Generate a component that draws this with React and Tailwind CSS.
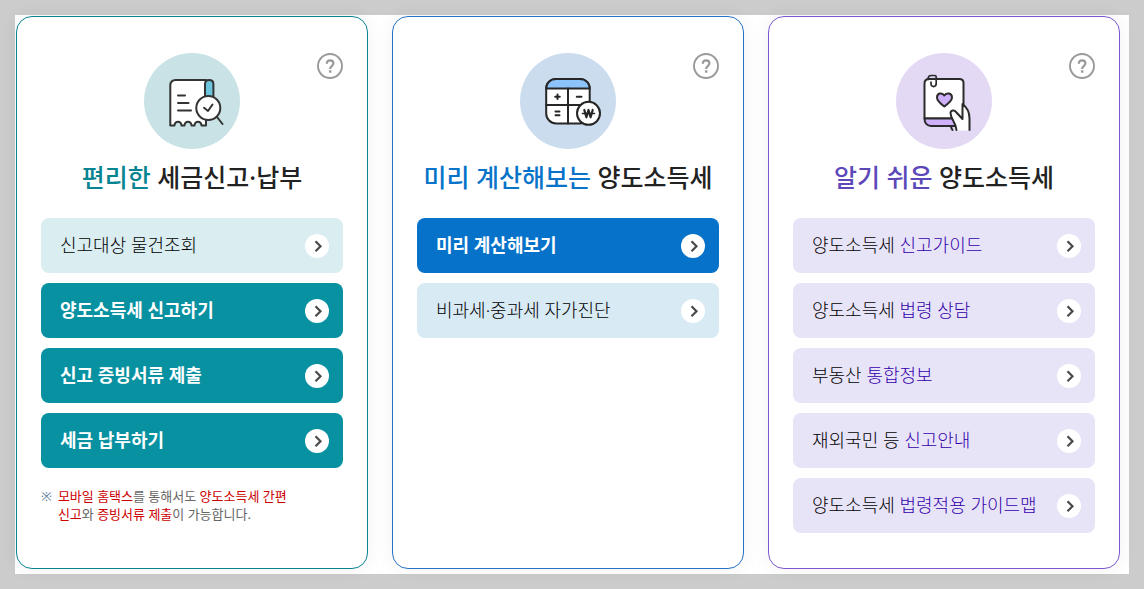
import React from 'react';

const FilingIcon = () => (
  <svg viewBox="0 0 96 96" className="w-24 h-24" fill="none" stroke="#333" strokeWidth="2" strokeLinecap="round" strokeLinejoin="round" aria-hidden="true">
    <circle cx="48" cy="48" r="48" fill="#c8e2e5" stroke="none" />
    <path d="M61 72.500h-3.500c-.5-5-6.500-5-7 0h-3c-.5-5-6.500-5-7 0h-3c-.5-5-6.500-5-7 0h-4.200V32.500c0-3.500 2-5.500 5.500-5.500h30.200v45.500z" fill="#fff" />
    <path d="M61 45V31c0-2.600 1.300-4 4.200-4s4.200 1.400 4.200 4v14z" fill="#6cc5dc" />
    <path d="M34 42.500h7M34 50h10.500M34 57.500h13" />
    <path d="M73 64l5.500 7" />
    <circle cx="64.300" cy="55" r="12" fill="#fff" />
    <path d="M60 54.800l4 3.200 4.500-6.500" />
  </svg>
);

const CalculatorIcon = () => (
  <svg viewBox="0 0 96 96" className="w-24 h-24" fill="none" stroke="#262626" strokeWidth="2" strokeLinecap="round" strokeLinejoin="round" aria-hidden="true">
    <circle cx="48" cy="48" r="48" fill="#cbdcef" stroke="none" />
    <rect x="26.200" y="26" width="43.500" height="44.500" rx="10" fill="#fff" />
    <path d="M26.200 35.500c0-5.500 4-9.500 10-9.500h23.500c6 0 10 4 10 9.500z" fill="#8cc3fb" />
    <path d="M26.200 52h43.500M48 35.500v35" />
    <path d="M35.200 43.800h4.600M37.500 41.500v4.600M56.800 43.800h4.700M35.500 58.500h4M35.500 62.200h4" strokeWidth="2" />
    <circle cx="68.500" cy="60.300" r="11.500" fill="#fff" />
    <path d="M64.300 57l2.100 7.300 2.100-7.300 2.100 7.300 2.100-7.300" strokeWidth="2.200" />
    <path d="M62.500 60.500h12" strokeWidth="1.600" />
  </svg>
);

const GuideIcon = () => (
  <svg viewBox="0 0 96 96" className="w-24 h-24" fill="none" stroke="#2b2b2b" strokeWidth="2" strokeLinecap="round" strokeLinejoin="round" aria-hidden="true">
    <circle cx="48" cy="48" r="48" fill="#e4d9f5" stroke="none" />
    <path d="M28.500 65.500V30.500c0-3 1.500-4.500 4.500-4.500h30.300c2.700 0 4.200 1.500 4.200 4v35.500z" fill="#fff" />
    <path d="M28.500 65.500H62v7.500H35c-4 0-6.500-3-6.500-7.500z" fill="#cfb0fb" />
    <path d="M32.200 26.500v-1c0-2 1-3 3-3h3.500c1 0 1.500.6 1.500 1.500v6.500c0 4-5.200 4-5.200 .5v-2" strokeWidth="1.700" />
    <path d="M48.300 53.500c-4-3-7.300-5.500-7.300-9 0-4.500 5.300-5.300 7.300-2 2-3.300 7.700-2.500 7.700 2 0 3.500-3.700 6-7.700 9z" fill="#cfb0fb" />
    <path d="M60.500 77.500c-.5-8.500-6-11.500-6-17.500 0-3 4-3.500 5.500-1l6.500 7V51c4 3 7.500 8.500 7.500 14.500v12z" fill="#fff" stroke="none" />
    <path d="M60.500 77c-.5-8-6-11-6-17 0-3 4-3.500 5.500-1l6.500 7V51c4 3 7 8.500 7 14.500V77M55 73.500c.3 1.500.8 2.500 1.500 3.500" />
  </svg>
);

const cards = [
  {
    id: 'filing',
    highlight: '편리한',
    title: '세금신고·납부',
    icon: <FilingIcon />,
    border: 'border-[#088491]',
    titleColor: 'text-[#078491]',
    primary: 'bg-[#0791a1]',
    secondary: 'bg-[#daedf0]',
    accent: 'text-[#111]',
    menus: [
      { label: '신고대상 물건조회' },
      { label: '양도소득세 신고하기', strong: true },
      { label: '신고 증빙서류 제출', strong: true },
      { label: '세금 납부하기', strong: true },
    ],
    hasNotice: true,
  },
  {
    id: 'calculate',
    highlight: '미리 계산해보는',
    title: '양도소득세',
    icon: <CalculatorIcon />,
    border: 'border-[#2572c4]',
    titleColor: 'text-[#0773c9]',
    primary: 'bg-[#0672c9]',
    secondary: 'bg-[#d8eaf4]',
    accent: 'text-[#111]',
    menus: [
      { label: '미리 계산해보기', strong: true },
      { label: '비과세·중과세 자가진단' },
    ],
  },
  {
    id: 'guide',
    highlight: '알기 쉬운',
    title: '양도소득세',
    icon: <GuideIcon />,
    border: 'border-[#7e57cc]',
    titleColor: 'text-[#5c48b9]',
    primary: 'bg-[#5c48b9]',
    secondary: 'bg-[#e8e4f8]',
    accent: 'text-[#3300aa]',
    menus: [
      { label: '양도소득세', accent: '신고가이드' },
      { label: '양도소득세', accent: '법령 상담' },
      { label: '부동산', accent: '통합정보' },
      { label: '재외국민 등', accent: '신고안내' },
      { label: '양도소득세', accent: '법령적용 가이드맵' },
    ],
  },
];

const HelpButton = ({ label }) => (
  <button type="button" aria-label={label} className="justify-self-end self-start cursor-pointer">
    <svg viewBox="0 0 26 26" className="w-[26px] h-[26px]" fill="none" stroke="#999" strokeWidth="2.200" aria-hidden="true">
      <circle cx="13" cy="13" r="12" strokeWidth="1.900" />
      <path d="M9.800 10.800c0-2.200 1.300-3.500 3.300-3.500s3.300 1.200 3.300 3c0 2.600-3.200 2.800-3.200 5.600" />
      <path d="M12 17.300h2.400v2.400H12z" fill="#999" stroke="none" />
    </svg>
  </button>
);

const MenuLink = ({ menu, card }) => (
  <a
    href="#"
    className={`flex items-center justify-between h-[55px] pl-[19px] pr-3.5 rounded-lg text-lg ${
      menu.strong ? `${card.primary} font-bold text-white` : `${card.secondary} font-light text-black`
    }`}
  >
    <span className="pb-0.5">
      {menu.label}
      {menu.accent && <span className={card.accent}> {menu.accent}</span>}
    </span>
    <span className="flex items-center justify-center w-6 h-6 rounded-full bg-white">
      <svg viewBox="0 0 24 24" className="w-6 h-6" fill="none" stroke="#4a4a4a" strokeWidth="2.200" aria-hidden="true">
        <path d="M10.500 7.200l5 5-5 5" />
      </svg>
    </span>
  </a>
);

const Notice = () => (
  <p className="flex gap-1.5 mt-[19px] text-[13px] leading-[18px] text-[#666]">
    <span className="text-[#5b7a9d]">※</span>
    <span>
      <em className="not-italic text-[#c00]">모바일 홈택스</em>를 통해서도 <em className="not-italic text-[#c00]">양도소득세 간편</em>
      <br />
      <em className="not-italic text-[#c00]">신고</em>와 <em className="not-italic text-[#c00]">증빙서류 제출</em>이 가능합니다.
    </span>
  </p>
);

const ServiceCard = ({ card }) => (
  <section className={`min-h-[553px] px-6 pt-9 pb-8 bg-white border rounded-2xl shadow-[0_0_20px_rgba(0,0,0,0.06)] ${card.border}`}>
    <div className="grid grid-cols-[1fr_auto_1fr]">
      <span />
      {card.icon}
      <HelpButton label={`${card.highlight} ${card.title} 도움말`} />
    </div>
    <h2 className="mt-2.5 mb-[23px] text-center text-[25px] leading-9 font-medium text-[#222] whitespace-nowrap">
      <span className={card.titleColor}>{card.highlight}</span> {card.title}
    </h2>
    <ul className="flex flex-col gap-2.5">
      {card.menus.map(menu => (
        <li key={`${menu.label}${menu.accent || ''}`}>
          <MenuLink menu={menu} card={card} />
        </li>
      ))}
    </ul>
    {card.hasNotice && <Notice />}
  </section>
);

const App = () => {
  return (
    <div className="min-h-screen p-[15px] bg-[#ccc] font-['Noto_Sans','Noto_Sans_CJK_KR',sans-serif]">
      <main className="grid grid-cols-3 gap-6 pt-px pl-px pr-[9px] pb-[5px] bg-white">
        {cards.map(card => (
          <ServiceCard key={card.id} card={card} />
        ))}
      </main>
    </div>
  );
};

export default App;
